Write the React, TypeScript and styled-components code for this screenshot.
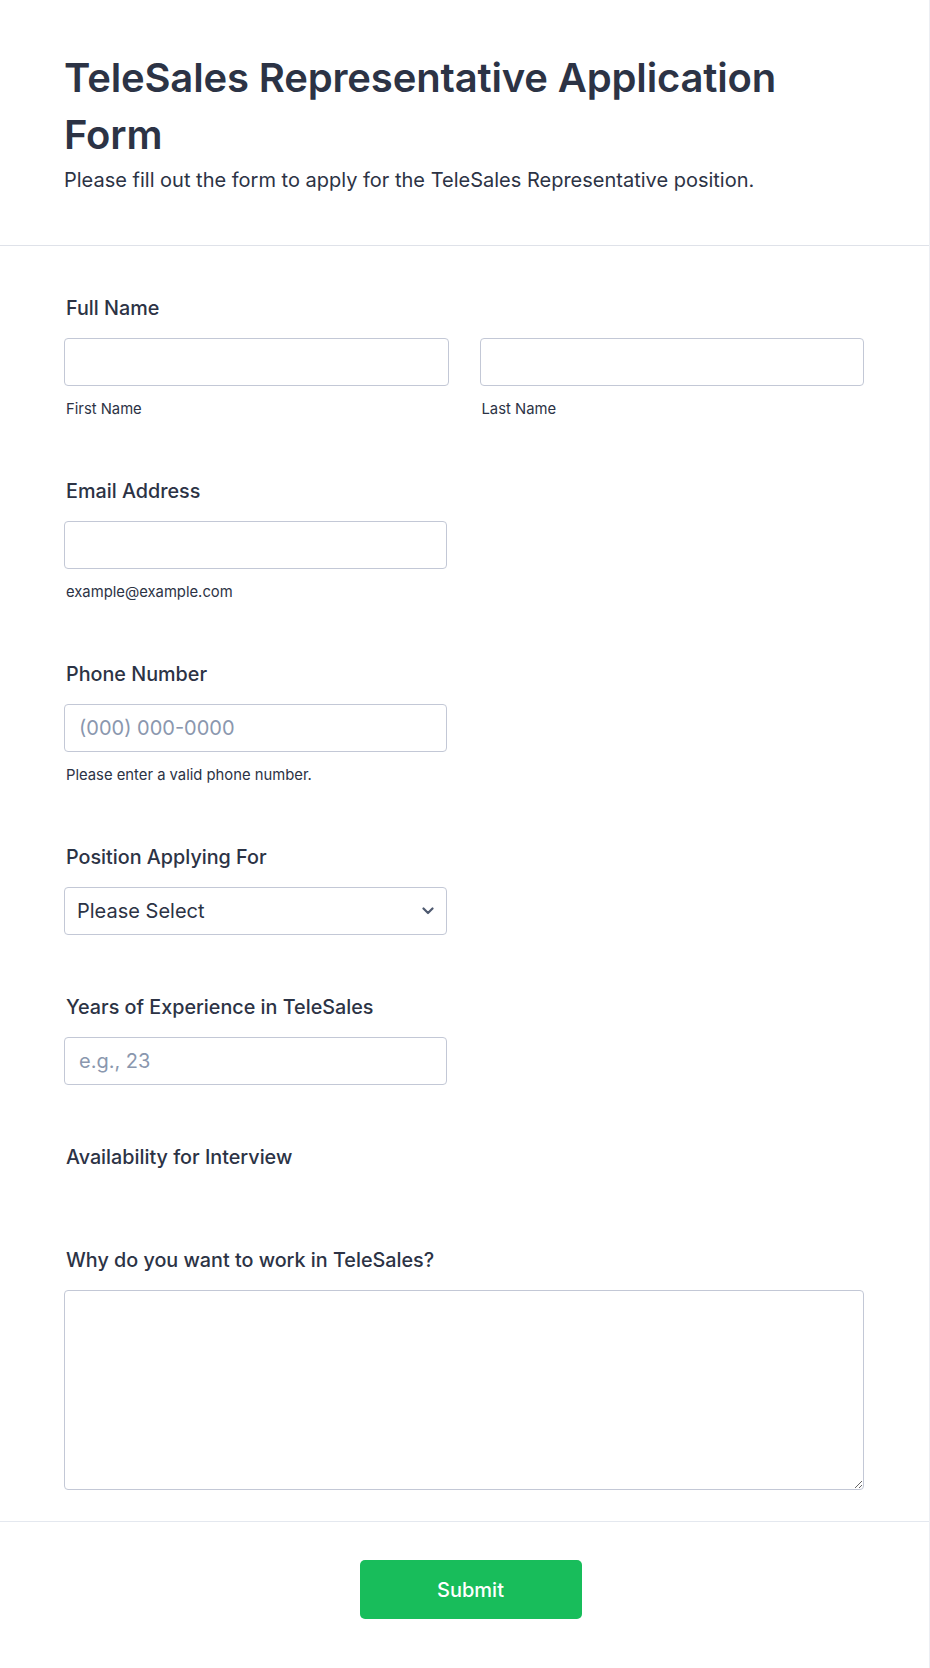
import React from 'react';
import styled, { createGlobalStyle } from 'styled-components';

const GlobalStyle = createGlobalStyle`
  * { box-sizing: border-box; }
  body {
    margin: 0;
    background: #ffffff;
    font-family: Inter, "Noto Sans", "Liberation Sans", sans-serif;
    color: #2c3345;
  }
`;

const Page = styled.div`
  width: 930px;
  min-height: 1668px;
  background: #ffffff;
  border-right: 1px solid #eceef3;
`;

const Header = styled.header`
  padding: 49px 64px 51px;
  border-bottom: 1px solid #dfe2e9;
`;

const Title = styled.h1`
  margin: 0;
  font-size: 40px;
  line-height: 57px;
  font-weight: 600;
  letter-spacing: -0.15px;
  color: #2c3345;
`;

const Subtitle = styled.p`
  margin: 3px 0 0;
  font-size: 20px;
  line-height: 28px;
  color: #2c3345;
`;

const FormBody = styled.div`
  display: flex;
  flex-direction: column;
  gap: 58px;
  padding: 48px 65px 31px 64px;
  border-bottom: 1px solid #e4e8ef;
`;

const Field = styled.div`
  display: flex;
  flex-direction: column;
`;

const Label = styled.label`
  padding-left: 2px;
  font-size: 19.75px;
  line-height: 28px;
  font-weight: 500;
  margin-bottom: 16px;
  color: #2c3345;
`;

const NameRow = styled.div`
  display: grid;
  grid-template-columns: 1fr 1fr;
  gap: 31px;
`;

const Column = styled.div`
  display: flex;
  flex-direction: column;
`;

const Input = styled.input<{ $half?: boolean }>`
  width: ${(p) => (p.$half ? '383px' : '100%')};
  height: 48px;
  padding: 0 14px;
  border: 1px solid #c3c8d6;
  border-radius: 4px;
  font-family: inherit;
  font-size: 20px;
  color: #2c3345;
  background: #fff;
  outline: none;

  &::placeholder {
    color: #8a97ae;
  }
`;

const SubLabel = styled.span`
  margin-top: 14px;
  padding-left: 2px;
  font-size: 14.8px;
  line-height: 19px;
  color: #2c3345;
`;

const SelectWrap = styled.div`
  position: relative;
  width: 383px;
`;

const Select = styled.select`
  width: 100%;
  height: 48px;
  padding: 0 40px 0 12px;
  border: 1px solid #c3c8d6;
  border-radius: 4px;
  font-family: inherit;
  font-size: 20px;
  color: #2c3345;
  background: #fff;
  appearance: none;
  outline: none;
`;

const Chevron = styled.svg`
  position: absolute;
  right: 13px;
  top: 50%;
  width: 12px;
  height: 8px;
  margin-top: -4px;
  pointer-events: none;
`;

const EmptySlot = styled.div`
  height: 1px;
`;

const TextArea = styled.textarea`
  width: 100%;
  height: 200px;
  padding: 12px 14px;
  border: 1px solid #c3c8d6;
  border-radius: 4px;
  font-family: inherit;
  font-size: 20px;
  color: #2c3345;
  outline: none;
  display: block;
`;

const Footer = styled.div`
  display: flex;
  justify-content: center;
  padding: 38px 0 49px 12px;
`;

const SubmitButton = styled.button`
  width: 222px;
  height: 59px;
  border: none;
  border-radius: 5px;
  background: #18bd5b;
  color: #ffffff;
  font-family: inherit;
  font-size: 20px;
  font-weight: 500;
  cursor: pointer;
`;

export default function App() {
  return (
    <>
      <GlobalStyle />
      <Page>
        <Header>
          <Title>TeleSales Representative Application Form</Title>
          <Subtitle>Please fill out the form to apply for the TeleSales Representative position.</Subtitle>
        </Header>

        <FormBody>
          <Field>
            <Label>Full Name</Label>
            <NameRow>
              <Column>
                <Input type="text" />
                <SubLabel>First Name</SubLabel>
              </Column>
              <Column>
                <Input type="text" />
                <SubLabel>Last Name</SubLabel>
              </Column>
            </NameRow>
          </Field>

          <Field>
            <Label>Email Address</Label>
            <Input type="email" $half />
            <SubLabel>example@example.com</SubLabel>
          </Field>

          <Field>
            <Label>Phone Number</Label>
            <Input type="tel" $half placeholder="(000) 000-0000" />
            <SubLabel>Please enter a valid phone number.</SubLabel>
          </Field>

          <Field>
            <Label>Position Applying For</Label>
            <SelectWrap>
              <Select defaultValue="">
                <option value="">Please Select</option>
                <option>TeleSales Representative</option>
                <option>Senior TeleSales Representative</option>
              </Select>
              <Chevron viewBox="0 0 12 8" fill="none">
                <path d="M1.5 1.5L6 6L10.5 1.5" stroke="#4f5a70" strokeWidth="2.2" strokeLinecap="round" strokeLinejoin="round" />
              </Chevron>
            </SelectWrap>
          </Field>

          <Field>
            <Label>Years of Experience in TeleSales</Label>
            <Input type="number" $half placeholder="e.g., 23" />
          </Field>

          <Field>
            <Label>Availability for Interview</Label>
            <EmptySlot />
          </Field>

          <Field>
            <Label>Why do you want to work in TeleSales?</Label>
            <TextArea />
          </Field>
        </FormBody>

        <Footer>
          <SubmitButton type="button">Submit</SubmitButton>
        </Footer>
      </Page>
    </>
  );
}
